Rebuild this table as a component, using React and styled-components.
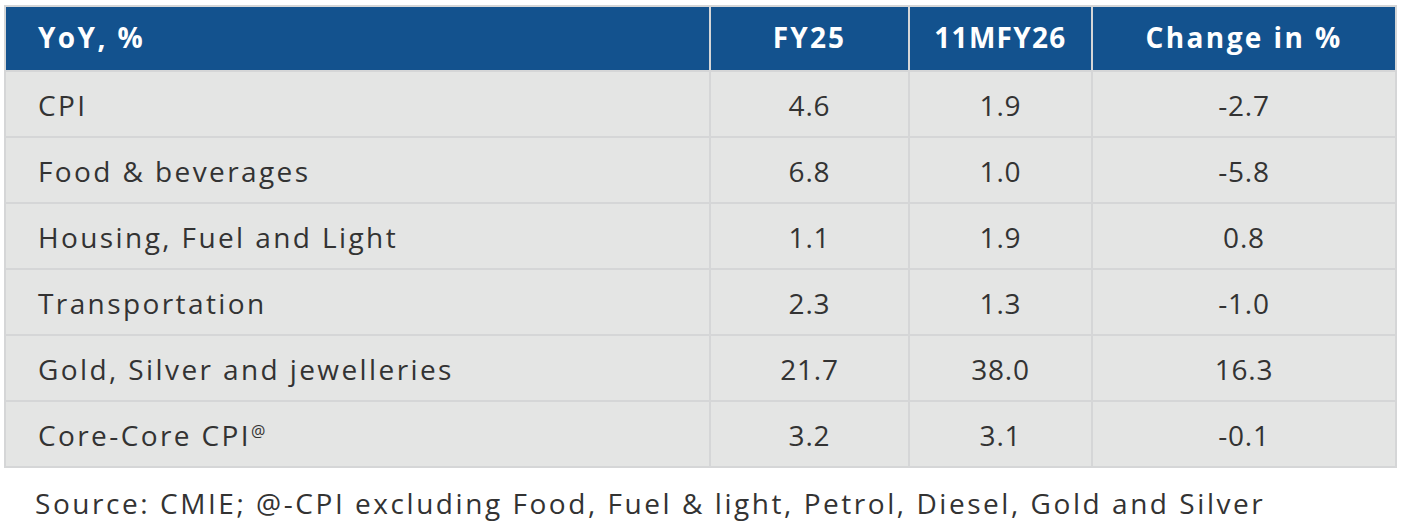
import React from "react";
import styled, { createGlobalStyle } from "styled-components";

const Global = createGlobalStyle`
  html, body { margin: 0; padding: 0; background: #ffffff; }
  body { font-family: "Open Sans", "Liberation Sans", sans-serif; }
`;

const Page = styled.div`
  width: 1404px;
  height: 526px;
  padding: 5px 0 0 4px;
  box-sizing: border-box;
`;

const Table = styled.div`
  display: grid;
  grid-template-columns: 703px 197px 181px 302px;
  grid-auto-rows: 64px;
  grid-template-rows: 63px;
  gap: 2px;
  padding: 2px;
  width: 1393px;
  box-sizing: border-box;
  background: #d5d6d7;
`;

const HeadCell = styled.div`
  background: #13528e;
  color: #ffffff;
  font-weight: 700;
  font-size: 28px;
  letter-spacing: ${(p) => p.$ls || "2.4px"};
  display: flex;
  align-items: center;
  justify-content: ${(p) => (p.$left ? "flex-start" : "center")};
  padding-left: ${(p) => (p.$left ? "32px" : "0")};
  padding-bottom: 3px;
`;

const Cell = styled.div`
  background: #e4e5e4;
  color: #333333;
  font-size: 28px;
  letter-spacing: ${(p) => (p.$left ? "2.4px" : "0.8px")};
  display: flex;
  align-items: center;
  justify-content: ${(p) => (p.$left ? "flex-start" : "center")};
  padding-left: ${(p) => (p.$left ? "32px" : "0")};
  padding-top: 1px;
`;

const Sup = styled.sup`
  font-size: 16px;
  position: relative;
  top: -4px;
  vertical-align: top;
  letter-spacing: 0;
`;

const Source = styled.div`
  margin: 16px 0 0 31px;
  font-size: 28px;
  letter-spacing: 2.55px;
  color: #333333;
`;

const rows = [
  ["CPI", "4.6", "1.9", "-2.7"],
  ["Food & beverages", "6.8", "1.0", "-5.8"],
  ["Housing, Fuel and Light", "1.1", "1.9", "0.8"],
  ["Transportation", "2.3", "1.3", "-1.0"],
  ["Gold, Silver and jewelleries", "21.7", "38.0", "16.3"],
  ["Core-Core CPI", "3.2", "3.1", "-0.1", true],
];

export default function App() {
  return (
    <Page>
      <Global />
      <Table>
        <HeadCell $left>YoY, %</HeadCell>
        <HeadCell $ls="2.2px">FY25</HeadCell>
        <HeadCell $ls="1.3px">11MFY26</HeadCell>
        <HeadCell>Change in %</HeadCell>
        {rows.map((r) => (
          <React.Fragment key={r[0]}>
            <Cell $left>
              {r[0]}
              {r[4] && <Sup>@</Sup>}
            </Cell>
            <Cell>{r[1]}</Cell>
            <Cell>{r[2]}</Cell>
            <Cell>{r[3]}</Cell>
          </React.Fragment>
        ))}
      </Table>
      <Source>
        Source: CMIE; @-CPI excluding Food, Fuel &amp; light, Petrol, Diesel, Gold and Silver
      </Source>
    </Page>
  );
}
